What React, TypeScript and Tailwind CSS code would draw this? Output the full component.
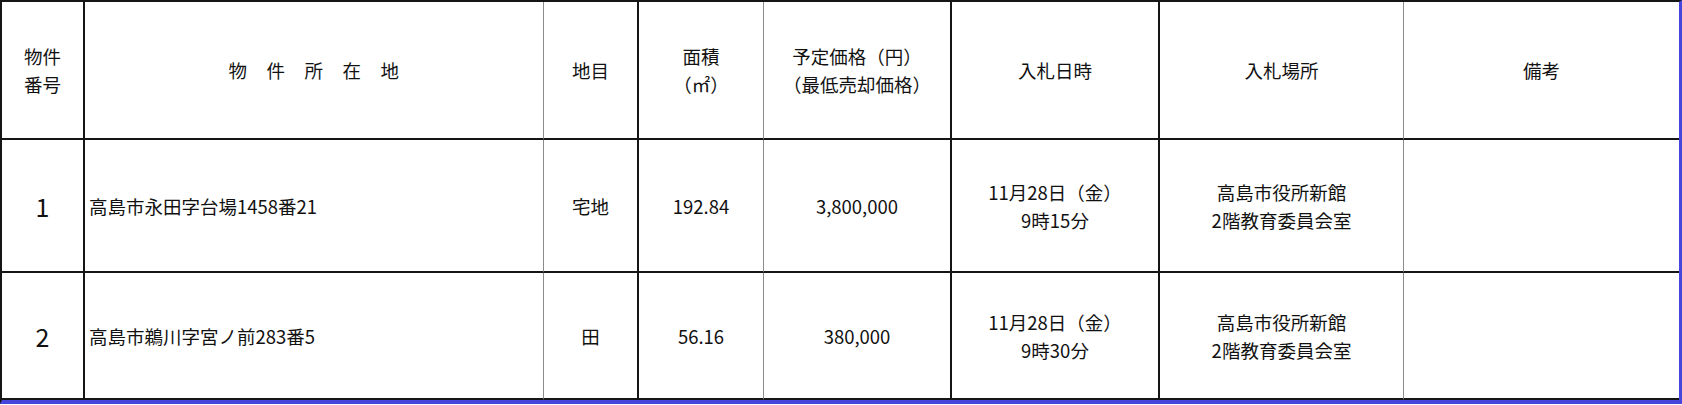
import React from "react";

type Row = {
  no: string;
  address: string;
  category: string;
  area: string;
  price: string;
  date: string;
  time: string;
};

const rows: Row[] = [
  {
    no: "1",
    address: "高島市永田字台場1458番21",
    category: "宅地",
    area: "192.84",
    price: "3,800,000",
    date: "11月28日（金）",
    time: "9時15分",
  },
  {
    no: "2",
    address: "高島市鵜川字宮ノ前283番5",
    category: "田",
    area: "56.16",
    price: "380,000",
    date: "11月28日（金）",
    time: "9時30分",
  },
];

// right-hand rule of each column: thick black or thin grey
const colBorder = [
  "border-r-2 border-r-[#151515]",
  "border-r border-r-[#8c8c8c]",
  "border-r-2 border-r-[#151515]",
  "border-r border-r-[#8c8c8c]",
  "border-r-2 border-r-[#151515]",
  "border-r-2 border-r-[#151515]",
  "border-r border-r-[#8c8c8c]",
  "",
];

function Cell({
  col,
  className = "",
  children,
}: {
  col: number;
  className?: string;
  children?: React.ReactNode;
}) {
  return (
    <div
      className={`flex items-center justify-center text-center border-b-2 border-b-[#151515] ${colBorder[col]} ${className}`}
    >
      {children}
    </div>
  );
}

export default function App() {
  return (
    <div className="w-[1682px] h-[405px] bg-white overflow-hidden">
      <div
        className="grid grid-cols-[83px_459px_95px_125px_188px_208px_244px_275px] grid-rows-[138px_133px_127px] w-[1682px] border-l-2 border-t-2 border-l-[#151515] border-t-[#151515] border-r-[3px] border-r-[#4646dc] border-b-4 border-b-[#4646dc] text-[#111] text-[18.5px] leading-[28px]"
        style={{ fontFamily: '"Noto Sans CJK JP", "Noto Sans", sans-serif' }}
      >
        {/* header */}
        <Cell col={0}>
          <span>
            物件
            <br />
            番号
          </span>
        </Cell>
        <Cell col={1} className="tracking-[0.5px]">物　件　所　在　地</Cell>
        <Cell col={2}>地目</Cell>
        <Cell col={3}>
          <span>
            面積
            <br />
            （㎡）
          </span>
        </Cell>
        <Cell col={4}>
          <span>
            予定価格（円）
            <br />
            （最低売却価格）
          </span>
        </Cell>
        <Cell col={5}>入札日時</Cell>
        <Cell col={6}>入札場所</Cell>
        <Cell col={7}>備考</Cell>

        {rows.map((r) => (
          <React.Fragment key={r.no}>
            <Cell col={0} className="text-[25px]">
              {r.no}
            </Cell>
            <Cell col={1} className="justify-start pl-[4px]">
              {r.address}
            </Cell>
            <Cell col={2}>{r.category}</Cell>
            <Cell col={3}>{r.area}</Cell>
            <Cell col={4}>{r.price}</Cell>
            <Cell col={5}>
              <span>
                {r.date}
                <br />
                {r.time}
              </span>
            </Cell>
            <Cell col={6}>
              <span>
                高島市役所新館
                <br />
                2階教育委員会室
              </span>
            </Cell>
            <Cell col={7} />
          </React.Fragment>
        ))}
      </div>
    </div>
  );
}
